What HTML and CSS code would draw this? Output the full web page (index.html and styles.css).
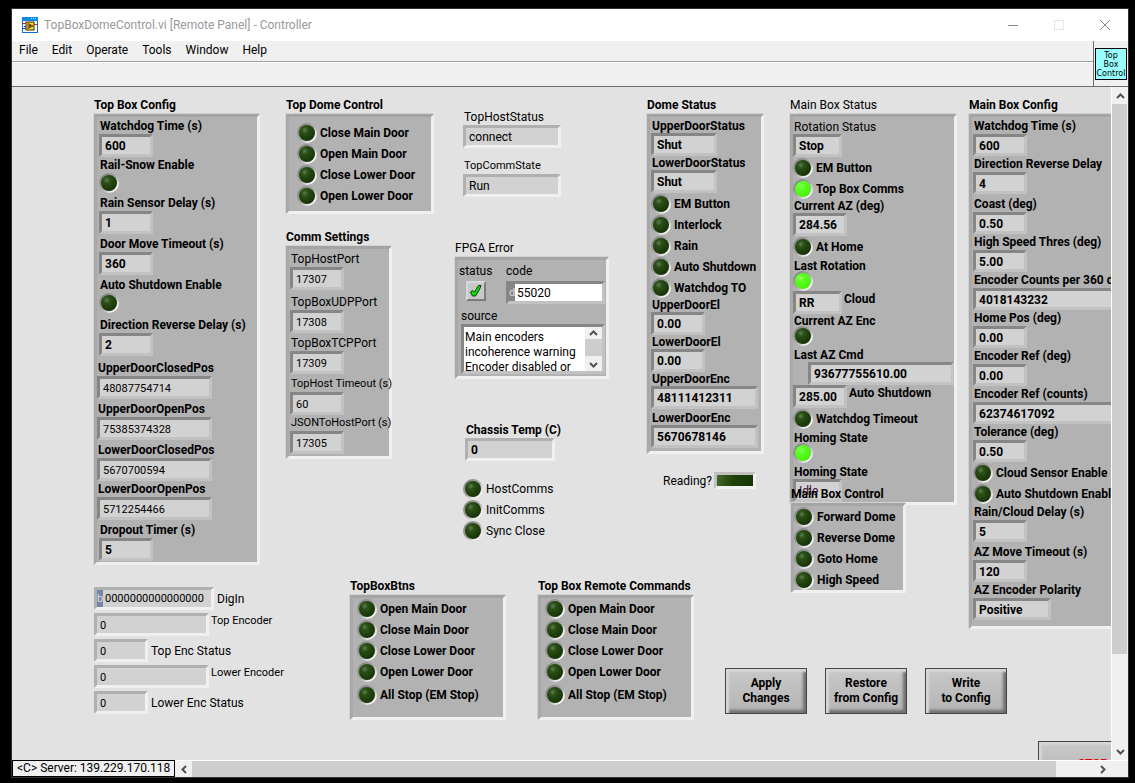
FILE: index.html
```html
<!DOCTYPE html>
<html lang="en">
    <head>
        <meta charset="UTF-8" />
        <meta name="viewport" content="width=device-width, initial-scale=1.0" />
        <title>TopBoxDomeControl.vi [Remote Panel] - Controller</title>
        <link rel="stylesheet" href="styles.css">
    </head>
    <body>
        <div class="window">
            <header class="titlebar">
                <svg class="app-icon" width="16" height="16" viewBox="0 0 16 16">
                    <rect x="0.5" y="0.5" width="15" height="15" fill="#fff" stroke="#0a6fd6" />
                    <rect width="16" height="4" fill="#0a8ae6" />
                    <path d="M9 1.5h1M11 1.5h1M13 1.5h1" stroke="#bfe4ff" />
                    <rect x="4" y="5" width="8" height="8" fill="#ffd92e" stroke="#3a2a00" />
                    <path d="M6 6.500l5 2.500-5 2.500z" fill="#f2c400" stroke="#222" stroke-width="0.8" />
                    <path d="M7 9h2M8 8v2" stroke="#111" stroke-width="0.8" />
                    <path d="M1 6.500h3M12 7.500h3" stroke="#e02020" />
                    <path d="M1 11.500h3M2 9.500h2" stroke="#1040e0" />
                </svg>
                <h1>TopBoxDomeControl.vi [Remote Panel] - Controller</h1>
                <div class="caption-buttons">
                    <button aria-label="Minimize">
                        <svg width="12" height="12"><path d="M1 6.500h10" stroke="#8a8a8a" /></svg>
                    </button>
                    <button aria-label="Maximize" disabled>
                        <svg width="12" height="12"><rect x="1.500" y="1.500" width="9" height="9" fill="none" stroke="#e4e4e4" /></svg>
                    </button>
                    <button aria-label="Close">
                        <svg width="12" height="12"><path d="M1 1l10 10M11 1L1 11" stroke="#8a8a8a" /></svg>
                    </button>
                </div>
            </header>

            <div class="bars">
                <div class="bars-main">
                    <nav class="menubar">
                        <button>File</button>
                        <button>Edit</button>
                        <button>Operate</button>
                        <button>Tools</button>
                        <button>Window</button>
                        <button>Help</button>
                    </nav>
                    <div class="toolbar"></div>
                </div>
                <div class="vi-icon-cell">
                    <div class="vi-icon">Top<br>Box<br>Control</div>
                </div>
            </div>

            <div class="view">
                <main class="canvas">
                    <!-- Top box configuration and encoders -->
                    <section class="col col-config">
                        <h2>Top Box Config</h2>
                        <div class="panel panel-config">
                            <label class="field"><span>Watchdog Time (s)</span><input class="box w-sm" value="600" readonly></label>
                            <label class="field"><span>Rail-Snow Enable</span><input type="checkbox" class="led"></label>
                            <label class="field gap-2"><span>Rain Sensor Delay (s)</span><input class="box w-sm" value="1" readonly></label>
                            <label class="field gap-2"><span>Door Move Timeout (s)</span><input class="box w-sm" value="360" readonly></label>
                            <label class="field gap-2"><span>Auto Shutdown Enable</span><input type="checkbox" class="led"></label>
                            <label class="field gap-4"><span>Direction Reverse Delay (s)</span><input class="box w-sm" value="2" readonly></label>
                            <div class="positions gap-4">
                                <label class="field"><span>UpperDoorClosedPos</span><input class="box w-lg plain" value="48087754714" readonly></label>
                                <label class="field gap-2"><span>UpperDoorOpenPos</span><input class="box w-lg plain" value="75385374328" readonly></label>
                                <label class="field gap-2"><span>LowerDoorClosedPos</span><input class="box w-lg plain" value="5670700594" readonly></label>
                                <label class="field"><span>LowerDoorOpenPos</span><input class="box w-lg plain" value="5712254466" readonly></label>
                            </div>
                            <label class="field gap-2"><span>Dropout Timer (s)</span><input class="box w-sm" value="5" readonly></label>
                        </div>

                        <div class="encoders">
                            <label class="side">
                                <span class="box entry w-xl"><b class="radix radix-b">b</b><input value="0000000000000000" readonly></span>
                                <span>DigIn</span>
                            </label>
                            <label class="side raised"><input class="box w-lg" value="0" readonly><span>Top Encoder</span></label>
                            <label class="side"><input class="box w-sm" value="0" readonly><span>Top Enc Status</span></label>
                            <label class="side raised"><input class="box w-lg" value="0" readonly><span>Lower Encoder</span></label>
                            <label class="side"><input class="box w-sm" value="0" readonly><span>Lower Enc Status</span></label>
                        </div>
                    </section>

                    <!-- Dome control, comms and errors -->
                    <section class="col-middle">
                        <div class="row middle-top">
                            <div class="col">
                                <h2>Top Dome Control</h2>
                                <div class="panel panel-dome">
                                    <label class="led-row"><input type="checkbox" class="led">Close Main Door</label>
                                    <label class="led-row"><input type="checkbox" class="led">Open Main Door</label>
                                    <label class="led-row"><input type="checkbox" class="led">Close Lower Door</label>
                                    <label class="led-row"><input type="checkbox" class="led">Open Lower Door</label>
                                </div>

                                <h2 class="title-comm">Comm Settings</h2>
                                <div class="panel panel-comm">
                                    <label class="field"><span>TopHostPort</span><input class="box w-sm" value="17307" readonly></label>
                                    <label class="field gap-4"><span>TopBoxUDPPort</span><input class="box w-sm" value="17308" readonly></label>
                                    <label class="field gap-2"><span>TopBoxTCPPort</span><input class="box w-sm" value="17309" readonly></label>
                                    <label class="field gap-2 small"><span>TopHost Timeout (s)</span><input class="box w-sm" value="60" readonly></label>
                                    <label class="field small"><span>JSONToHostPort (s)</span><input class="box w-sm" value="17305" readonly></label>
                                </div>
                            </div>

                            <div class="col col-status">
                                <div class="host">
                                    <label class="field"><span>TopHostStatus</span><input class="box w-md" value="connect" readonly></label>
                                    <label class="field small"><span>TopCommState</span><input class="box w-md" value="Run" readonly></label>
                                </div>

                                <h2 class="title-error plain">FPGA Error</h2>
                                <div class="panel panel-error">
                                    <div class="row">
                                        <div class="error-status">
                                            <span>status</span>
                                            <div class="check" role="img" aria-label="No error">
                                                <svg width="14" height="14" viewBox="0 0 14 14">
                                                    <path d="M1.500 8l2-1.500 2 1.500L9.500 1.500l2.500 0-1.500 4-4 6.500-3 0z" fill="#0be00b" stroke="#063806" />
                                                </svg>
                                            </div>
                                        </div>
                                        <label class="error-code">
                                            <span>code</span>
                                            <span class="box entry white"><b class="radix">d</b><input value="55020" readonly></span>
                                        </label>
                                    </div>
                                    <label class="error-source-label" for="source">source</label>
                                    <div class="box error-source">
                                        <textarea id="source" readonly>Main encoders
incoherence warning
Encoder disabled or</textarea>
                                        <div class="scroll-y mini">
                                            <button aria-label="Scroll up"><svg width="9" height="6"><path d="M1 5l3.500-3.500L8 5" /></svg></button>
                                            <div class="thumb"></div>
                                            <button aria-label="Scroll down"><svg width="9" height="6"><path d="M1 1l3.500 3.500L8 1" /></svg></button>
                                        </div>
                                    </div>
                                </div>

                                <div class="chassis">
                                    <label class="field bold"><span>Chassis Temp (C)</span><input class="box w-md" value="0" readonly></label>
                                    <div class="comms">
                                        <label class="led-row"><input type="checkbox" class="led">HostComms</label>
                                        <label class="led-row"><input type="checkbox" class="led">InitComms</label>
                                        <label class="led-row"><input type="checkbox" class="led">Sync Close</label>
                                    </div>
                                </div>
                            </div>
                        </div>

                        <div class="row middle-bottom">
                            <div class="col">
                                <h2>TopBoxBtns</h2>
                                <div class="panel panel-buttons">
                                    <label class="led-row"><input type="checkbox" class="led">Open Main Door</label>
                                    <label class="led-row"><input type="checkbox" class="led">Close Main Door</label>
                                    <label class="led-row"><input type="checkbox" class="led">Close Lower Door</label>
                                    <label class="led-row"><input type="checkbox" class="led">Open Lower Door</label>
                                    <label class="led-row gap-2"><input type="checkbox" class="led">All Stop (EM Stop)</label>
                                </div>
                            </div>
                            <div class="col">
                                <h2>Top Box Remote Commands</h2>
                                <div class="panel panel-buttons">
                                    <label class="led-row"><input type="checkbox" class="led">Open Main Door</label>
                                    <label class="led-row"><input type="checkbox" class="led">Close Main Door</label>
                                    <label class="led-row"><input type="checkbox" class="led">Close Lower Door</label>
                                    <label class="led-row"><input type="checkbox" class="led">Open Lower Door</label>
                                    <label class="led-row gap-2"><input type="checkbox" class="led">All Stop (EM Stop)</label>
                                </div>
                            </div>
                        </div>
                    </section>

                    <!-- Dome and main box -->
                    <section class="col-right">
                        <div class="row">
                            <div class="col col-dome">
                                <h2>Dome Status</h2>
                                <div class="panel tight panel-status">
                                    <label class="field"><span>UpperDoorStatus</span><input class="box w-door" value="Shut" readonly></label>
                                    <label class="field"><span>LowerDoorStatus</span><input class="box w-door" value="Shut" readonly></label>
                                    <label class="led-row"><input type="checkbox" class="led">EM Button</label>
                                    <label class="led-row"><input type="checkbox" class="led">Interlock</label>
                                    <label class="led-row"><input type="checkbox" class="led">Rain</label>
                                    <label class="led-row"><input type="checkbox" class="led">Auto Shutdown</label>
                                    <label class="led-row"><input type="checkbox" class="led">Watchdog TO</label>
                                    <label class="field"><span>UpperDoorEl</span><input class="box w-sm" value="0.00" readonly></label>
                                    <label class="field"><span>LowerDoorEl</span><input class="box w-sm" value="0.00" readonly></label>
                                    <label class="field"><span>UpperDoorEnc</span><input class="box w-enc" value="48111412311" readonly></label>
                                    <label class="field gap-2"><span>LowerDoorEnc</span><input class="box w-enc" value="5670678146" readonly></label>
                                </div>
                                <label class="reading">Reading?<input type="checkbox" class="bar-led"></label>
                            </div>

                            <div class="col col-main">
                                <h2 class="plain">Main Box Status</h2>
                                <div class="panel tight panel-main">
                                    <label class="field"><span class="plain">Rotation Status</span><input class="box w-xs" value="Stop" readonly></label>
                                    <label class="led-row"><input type="checkbox" class="led">EM Button</label>
                                    <label class="led-row"><input type="checkbox" class="led" checked>Top Box Comms</label>
                                    <label class="field"><span>Current AZ (deg)</span><input class="box w-sm" value="284.56" readonly></label>
                                    <label class="led-row"><input type="checkbox" class="led">At Home</label>
                                    <label class="field gap-2"><span>Last Rotation</span><input type="checkbox" class="led" checked></label>
                                    <label class="side raised gap-2"><input class="box w-xs" value="RR" readonly><span>Cloud</span></label>
                                    <label class="field"><span>Current AZ Enc</span><input type="checkbox" class="led"></label>
                                    <label class="field gap-4 wide"><span>Last AZ Cmd</span><input class="box" value="93677755610.00" readonly></label>
                                    <label class="side raised"><input class="box w-sm" value="285.00" readonly><span>Auto Shutdown</span></label>
                                    <label class="led-row"><input type="checkbox" class="led">Watchdog Timeout</label>
                                    <label class="field gap-2"><span>Homing State</span><input type="checkbox" class="led" checked></label>
                                    <label class="field gap-4"><span>Homing State</span><input class="box w-xs plain idle" value="Idle" readonly></label>
                                </div>

                                <div class="main-control">
                                    <h2>Main Box Control</h2>
                                    <div class="panel panel-control">
                                        <label class="led-row"><input type="checkbox" class="led">Forward Dome</label>
                                        <label class="led-row"><input type="checkbox" class="led">Reverse Dome</label>
                                        <label class="led-row"><input type="checkbox" class="led">Goto Home</label>
                                        <label class="led-row"><input type="checkbox" class="led">High Speed</label>
                                    </div>
                                </div>
                            </div>

                            <div class="col">
                                <h2>Main Box Config</h2>
                                <div class="panel panel-main-config">
                                    <label class="field"><span>Watchdog Time (s)</span><input class="box w-sm" value="600" readonly></label>
                                    <label class="field"><span>Direction Reverse Delay</span><input class="box w-sm" value="4" readonly></label>
                                    <label class="field gap-2"><span>Coast (deg)</span><input class="box w-sm" value="0.50" readonly></label>
                                    <label class="field"><span>High Speed Thres (deg)</span><input class="box w-sm" value="5.00" readonly></label>
                                    <label class="field"><span>Encoder Counts per 360 deg</span><input class="box w-full" value="4018143232" readonly></label>
                                    <label class="field"><span>Home Pos (deg)</span><input class="box w-sm" value="0.00" readonly></label>
                                    <label class="field"><span>Encoder Ref (deg)</span><input class="box w-sm" value="0.00" readonly></label>
                                    <label class="field"><span>Encoder Ref (counts)</span><input class="box w-full" value="62374617092" readonly></label>
                                    <label class="field"><span>Tolerance (deg)</span><input class="box w-sm" value="0.50" readonly></label>
                                    <label class="led-row"><input type="checkbox" class="led">Cloud Sensor Enable</label>
                                    <label class="led-row"><input type="checkbox" class="led">Auto Shutdown Enable</label>
                                    <label class="field"><span>Rain/Cloud Delay (s)</span><input class="box w-sm" value="5" readonly></label>
                                    <label class="field gap-2"><span>AZ Move Timeout (s)</span><input class="box w-sm" value="120" readonly></label>
                                    <label class="field"><span>AZ Encoder Polarity</span><input class="box w-pol" value="Positive" readonly></label>
                                </div>
                            </div>
                        </div>

                        <div class="actions">
                            <button class="btn">Apply<br>Changes</button>
                            <button class="btn">Restore<br>from Config</button>
                            <button class="btn">Write<br>to Config</button>
                        </div>
                        <button class="btn btn-stop">STOP</button>
                    </section>
                </main>

                <div class="scroll-y">
                    <button aria-label="Scroll up"><svg width="9" height="6"><path d="M1 5l3.500-3.500L8 5" /></svg></button>
                    <div class="thumb"></div>
                    <button aria-label="Scroll down"><svg width="9" height="6"><path d="M1 1l3.500 3.500L8 1" /></svg></button>
                </div>
            </div>

            <footer class="statusbar">
                <div class="server">&lt;C&gt; Server: 139.229.170.118</div>
                <div class="scroll-x">
                    <button aria-label="Scroll left"><svg width="6" height="9"><path d="M5 1L1.500 4.500 5 8" /></svg></button>
                    <div class="thumb"></div>
                    <button aria-label="Scroll right"><svg width="6" height="9"><path d="M1 1l3.500 3.500L1 8" /></svg></button>
                </div>
            </footer>
        </div>
    </body>
</html>
```

FILE: styles.css
```css
* {
    box-sizing: border-box;
}
body {
    margin: 0;
    padding: 9px 7px 6px 12px;
    background: #000;
    color: #000;
    font-family: Roboto, 'Noto Sans', sans-serif;
    font-size: 12px;
    line-height: 16px;
}
h1,
h2 {
    margin: 0;
    font-size: 12px;
    font-weight: normal;
    white-space: nowrap;
}
button,
input,
textarea {
    font: inherit;
    color: inherit;
}
button {
    padding: 0;
    border: none;
    background: none;
}

/* captions are bold, a few are plain */
h2,
.panel,
.bold,
.btn {
    font-weight: bold;
}
.plain,
.panel-comm,
.panel-error {
    font-weight: normal;
}

/* window frame */
.window {
    display: flex;
    flex-direction: column;
    height: calc(100vh - 15px);
    background: #f0f0f0;
    box-shadow: 0 0 0 1px #333;
}
.titlebar {
    display: flex;
    align-items: center;
    height: 32px;
    padding-left: 10px;
    background: #fff;
}
.titlebar h1 {
    flex: 1;
    margin-left: 6px;
    color: #999;
}
.caption-buttons {
    display: flex;
}
.caption-buttons button {
    display: flex;
    align-items: center;
    justify-content: center;
    width: 46px;
    height: 30px;
}
.bars {
    display: flex;
    height: 46px;
    border-bottom: 1px solid #6d6d6d;
}
.bars-main {
    flex: 1;
}
.menubar {
    display: flex;
    gap: 14px;
    height: 21px;
    padding-left: 7px;
    border-bottom: 1px solid #a0a0a0;
}
.menubar button {
    height: 18px;
}
.toolbar {
    height: 24px;
    border-top: 1px solid #fff;
}
.vi-icon-cell {
    display: flex;
    align-items: center;
    justify-content: center;
    width: 35px;
    border-left: 1px solid #6d6d6d;
}
.vi-icon {
    width: 32px;
    height: 32px;
    padding-top: 2px;
    border: 1px solid #000;
    background: #99ffff;
    font: 8px/9px 'DejaVu Sans', sans-serif;
    text-align: center;
}

/* front panel */
.view {
    display: flex;
    flex: 1;
    min-height: 0;
}
.canvas {
    --shade: #b0b0b0;
    --light: #f0f0f0;
    display: flex;
    flex: 1;
    min-width: 0;
    padding: 9px 0 0 82px;
    overflow: hidden;
    background: #e2e2e2;
}
.row {
    display: flex;
    align-items: flex-start;
}
.col {
    display: flex;
    flex: none;
    flex-direction: column;
    align-items: flex-start;
}
h2 {
    line-height: 18px;
}
.panel {
    --shade: #868686;
    --light: #c2c2c2;
    border: 3px solid;
    border-color: #a4a4a4 #f0f0f0 #f0f0f0 #a8a8a8;
    background: #b2b2b2;
    box-shadow: -1px -1px 0 #d2d2d2;
}
.gap-2 {
    margin-top: 2px;
}
.gap-4 {
    margin-top: 4px;
}

/* sunken value box */
.box {
    display: block;
    height: 23px;
    padding: 1px 0 0 3px;
    border: 3px solid;
    border-color: var(--shade) var(--light) var(--light) var(--shade);
    border-radius: 0;
    background: #d2d2d2;
    outline: none;
}
.w-xs {
    width: 49px;
}
.w-sm {
    width: 54px;
}
.w-door {
    width: 66px;
}
.w-pol {
    width: 78px;
}
.w-md {
    width: 98px;
}
.w-enc {
    width: 107px;
}
.w-lg {
    width: 115px;
}
.w-xl {
    width: 120px;
}
.w-full {
    width: 100%;
}
.positions .box,
.panel-comm .box,
.encoders .box {
    font-size: 11px;
}
.entry {
    display: flex;
    padding: 0;
}
.entry input {
    flex: 1;
    min-width: 0;
    padding: 0 0 0 2px;
    border: none;
    background: none;
    outline: none;
}
.entry.white {
    background: #fff;
}
.radix {
    width: 6px;
    background: #858585;
    color: #ddd;
    font-size: 11px;
    font-weight: normal;
    line-height: 17px;
    overflow: hidden;
}
.radix-b {
    background: #7485a5;
}

/* value with its caption above */
.field {
    display: block;
    white-space: nowrap;
}
.field span {
    display: block;
    height: 16px;
    padding-left: 1px;
}
.small span {
    font-size: 11px;
}
.tight .field span {
    height: 14px;
    line-height: 14px;
}
.tight .field .led {
    margin: -2px 0;
}

/* value with its caption at the right */
.side {
    display: flex;
    align-items: center;
    gap: 3px;
    white-space: nowrap;
}
.raised {
    align-items: flex-start;
    gap: 2px;
}

.led {
    display: block;
    flex: none;
    width: 20px;
    height: 20px;
    margin: 0;
    border: 2px solid transparent;
    border-radius: 50%;
    appearance: none;
    background:
        radial-gradient(circle at 36% 32%, #5c8050 0, #2b4f17 22%, #1b3a0a 60%, #102803 100%) padding-box,
        linear-gradient(135deg, #858585 15%, #a8a8a8 50%, #f4f4f4 80%) border-box;
}
.led:checked {
    background:
        radial-gradient(circle at 36% 32%, #8cff60 0, #58ff1e 28%, #48f00e 75%, #30b806 100%) padding-box,
        linear-gradient(135deg, #858585 15%, #a8a8a8 50%, #f4f4f4 80%) border-box;
}
.led-row {
    display: flex;
    align-items: center;
    gap: 3px;
    height: 21px;
    white-space: nowrap;
}

/* top box config */
.col-config {
    width: 192px;
}
.panel-config {
    width: 166px;
    padding: 1px 0 1px 2px;
}
.positions {
    margin-left: -2px;
}
.encoders {
    display: grid;
    gap: 3px;
    margin-top: 22px;
}
.encoders .raised span {
    font-size: 11px;
}

/* middle */
.col-middle {
    flex: none;
    width: 361px;
}
.middle-top {
    gap: 21px;
}
.panel-dome {
    width: 148px;
    padding: 5px 8px;
}
.title-comm {
    margin-top: 14px;
}
.panel-comm {
    width: 106px;
    padding: 2px 0 2px 1px;
}
.col-status {
    width: 154px;
    padding-top: 13px;
}
.host {
    display: grid;
    gap: 10px;
    padding-left: 8px;
}
.title-error {
    margin-top: 42px;
}
.panel-error {
    width: 100%;
    padding: 3px 1px 2px;
}
.error-status {
    width: 47px;
}
.check {
    display: flex;
    align-items: center;
    justify-content: center;
    width: 20px;
    height: 20px;
    margin: 2px 0 0 7px;
    border: 2px solid;
    border-color: #d8d8d8 #7c7c7c #7c7c7c #d8d8d8;
    background: #c8c8c8;
}
.error-code {
    flex: 1;
    min-width: 0;
}
.error-code .entry {
    margin-top: 2px;
}
.error-source-label {
    display: block;
    margin: 4px 0 0 2px;
}
.error-source {
    display: flex;
    height: 50px;
    margin-left: 2px;
    padding: 0;
    background: #fff;
}
.error-source textarea {
    flex: 1;
    min-width: 0;
    padding: 3px 0 0 1px;
    border: none;
    outline: none;
    resize: none;
    overflow: hidden;
    background: none;
    line-height: 15px;
    white-space: pre;
}
.chassis {
    margin-top: 43px;
    padding-left: 10px;
}
.chassis .box {
    width: 90px;
}
.comms {
    margin: 17px 0 0 -2px;
}
.middle-bottom {
    gap: 32px;
    margin-top: 36px;
    padding-left: 64px;
}
.panel-buttons {
    width: 156px;
    padding: 0 4px 12px;
}

/* right */
.col-right {
    flex: none;
}
.col-dome {
    width: 143px;
}
.panel-status {
    width: 117px;
    padding: 2px 0 3px 1px;
}
.reading {
    display: flex;
    align-items: center;
    gap: 2px;
    margin: 18px 0 0 16px;
}
.bar-led {
    width: 42px;
    height: 17px;
    margin: 0;
    border: 3px solid;
    border-color: #c0c0c0 #f0f0f0 #f0f0f0 #c0c0c0;
    appearance: none;
    background: linear-gradient(100deg, #44682f 0, #1f4209 45%, #163503 100%);
}
.col-main {
    width: 179px;
}
.panel-main {
    width: 167px;
    padding-top: 3px;
}
.wide .box {
    width: calc(100% - 15px);
    margin-left: 15px;
}
.idle {
    color: #40103c;
}
/* this cluster sits over the lower edge of the status panel */
.main-control {
    z-index: 1;
    margin: -20px 0 0 1px;
}
.panel-control {
    width: 115px;
}
.panel-main-config {
    width: 180px;
    padding: 1px 0 6px 1px;
}
.panel-main-config .box {
    height: 22px;
}
.actions {
    display: flex;
    gap: 18px;
    margin: 39px 0 0 78px;
}
.btn {
    width: 82px;
    height: 46px;
    border: 1px solid #444;
    background: linear-gradient(#c8c8c8, #b4b4b4);
    box-shadow: inset 3px 3px 2px #d6d6d6, inset -3px -3px 3px #707070;
    line-height: 15px;
}
.btn-stop {
    display: block;
    width: 110px;
    margin: 27px 0 0 391px;
    color: #e00000;
}

/* scroll bars and status */
.scroll-y,
.scroll-x {
    display: flex;
    background: #f0f0f0;
}
.scroll-y {
    flex-direction: column;
    width: 17px;
    border-left: 1px solid #fff;
}
.scroll-x {
    flex: 1;
    padding-right: 17px;
    border-top: 1px solid #fff;
}
.scroll-y button,
.scroll-x button {
    display: flex;
    align-items: center;
    justify-content: center;
    flex: none;
    width: 17px;
    height: 17px;
}
.scroll-y path,
.scroll-x path {
    fill: none;
    stroke: #505050;
    stroke-width: 2;
}
.thumb {
    background: #cdcdcd;
}
.scroll-y .thumb {
    flex: 1;
    margin-right: 1px;
}
.scroll-y .thumb + button {
    margin-top: 89px;
}
.scroll-x .thumb {
    flex: 1;
    margin-right: 38px;
}
.scroll-y.mini {
    border: none;
}
.mini .thumb {
    margin: 0;
}
.scroll-y.mini button {
    height: 12px;
}
.scroll-y.mini .thumb + button {
    margin-top: 3px;
}
.statusbar {
    display: flex;
    height: 17px;
}
.server {
    padding: 0 4px;
    border: 1px solid #000;
    line-height: 14px;
}
```
